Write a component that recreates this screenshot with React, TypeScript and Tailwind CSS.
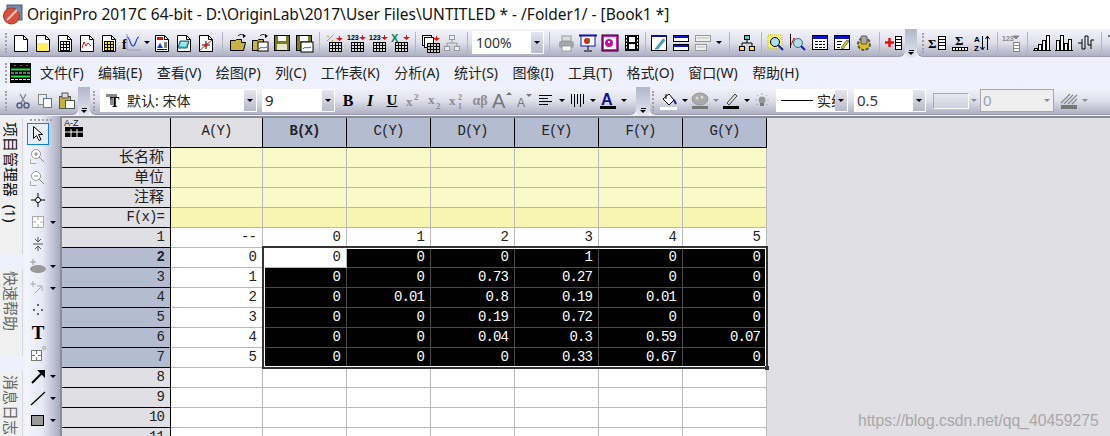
import type { ReactNode } from "react";

const mono = "font-['Liberation_Mono','Noto_Sans_CJK_SC',monospace]";
const cjk = "font-['Noto_Sans','Noto_Sans_CJK_SC',sans-serif]";

const S = ({ children, w = 20, h = 20 }: { children?: ReactNode; w?: number; h?: number }) => (
  <svg width={w} height={h} viewBox={`0 0 ${w} ${h}`} className="shrink-0">
    {children}
  </svg>
);

// small table drawn with lines
const Tbl = ({ x, y, c, r, cw = 4, ch = 3, fill = "#fff", line = "#000" }: { x: number; y: number; c: number; r: number; cw?: number; ch?: number; fill?: string; line?: string }) => {
  const w = c * cw;
  const h = r * ch;
  return (
    <g>
      <rect x={x + 0.5} y={y + 0.5} width={w} height={h} fill={fill} stroke={line} />
      {Array.from({ length: c - 1 }).map((_, i) => (
        <path key={i} d={`M${x + 0.5 + (i + 1) * cw} ${y}v${h}`} stroke={line} />
      ))}
      {Array.from({ length: r - 1 }).map((_, i) => (
        <path key={i} d={`M${x} ${y + 0.5 + (i + 1) * ch}h${w}`} stroke={line} />
      ))}
    </g>
  );
};

const Doc = ({ children }: { children?: ReactNode }) => (
  <S>
    <path d="M3.500 2.500h9l4 4v12h-13z" fill="#fff" stroke="#000" />
    <path d="M12.500 2.500v4h4" fill="none" stroke="#000" />
    {children}
  </S>
);

const Folder = ({ children }: { children?: ReactNode }) => (
  <S>
    <path d="M2.500 7.500h5l1-1h5v3h4l-2 8h-13z" fill="#c9b24a" stroke="#000" />
    <path d="M10 3c2-2 4-2 6 0" fill="none" stroke="#000" />
    <path d="M15 1l3 2-3 2z" fill="#000" />
    {children}
  </S>
);

const Floppy = ({ children }: { children?: ReactNode }) => (
  <S>
    <rect x="2.500" y="2.500" width="15" height="15" fill="#7b7b1a" stroke="#000" />
    <rect x="6" y="3" width="8" height="5" fill="#fff" />
    {children}
  </S>
);

const DownRed = ({ x, y }: { x: number; y: number }) => (
  <path d={`M${x} ${y}h3v-2h1v2h3l-3.500 3z`} fill="#e01010" />
);

const Bars = ({ v }: { v: number[] }) => (
  <S>
    <path d="M1 17.500h18" stroke="#000" />
    {v.map((h, i) => (
      <rect key={i} x={2.5 + i * 4} y={17.5 - h} width="3" height={h} fill="#fff" stroke="#000" />
    ))}
  </S>
);

const Arrow = () => (
  <span className="w-[9px] shrink-0 flex justify-center">
    <span className="w-0 h-0 border-l-[3px] border-r-[3px] border-t-[3px] border-l-transparent border-r-transparent border-t-black" />
  </span>
);

const GArrow = () => (
  <span className="w-[9px] shrink-0 flex justify-center">
    <span className="w-0 h-0 border-l-[3px] border-r-[3px] border-t-[3px] border-l-transparent border-r-transparent border-t-[#8c8c96]" />
  </span>
);

const B = ({ children }: { children?: ReactNode }) => (
  <div className="w-[22px] h-[22px] shrink-0 flex items-center justify-center">{children}</div>
);

const Sep = ({ className }: { className: string }) => (
  <div className={`${className} h-[22px] shrink-0 flex justify-center`}>
    <div className="w-px h-full bg-[#b4b5c4]" />
  </div>
);

const Grip = () => <div className="w-[2px] h-[20px] shrink-0 border-l-2 border-dotted border-[#a0a1ad]" />;

const Handle = ({ className }: { className: string }) => (
  <div className={`${className} h-[29px] shrink-0 self-start rounded-b-md bg-linear-to-b from-[#b4b7c8] to-[#e4e6f2] flex flex-col items-center justify-end pb-[3px]`}>
    <div className="w-[5px] h-px bg-black mb-px" />
    <div className="w-0 h-0 border-l-[3px] border-r-[3px] border-t-[3px] border-l-transparent border-r-transparent border-t-black" />
  </div>
);

const Band = ({ className, children }: { className: string; children: ReactNode }) => (
  <div className={`${className} h-[28px] flex items-center bg-linear-to-b from-[#f3f4fb] via-[#dfe0ea] to-[#aeb0c2] border-b border-[#9a9bb0]`}>
    {children}
  </div>
);

const Combo = ({ className, children, gray }: { className: string; children: ReactNode; gray?: boolean }) => (
  <div className={`${className} h-[23px] shrink-0 flex items-center overflow-hidden border ${gray ? "bg-[#efefef] border-[#a8a8a8]" : "bg-white border-white"}`}>
    <div className={`flex-1 min-w-0 overflow-hidden flex items-center ${cjk} text-[15px] ${gray ? "text-[#9aa0b0]" : "text-[#222]"}`}>{children}</div>
    {gray ? (
      <div className="w-[12px] flex justify-center"><GArrow /></div>
    ) : (
      <div className="w-[12px] h-full shrink-0 bg-linear-to-b from-[#e4e5ee] to-[#b8bacb] flex items-center justify-center"><Arrow /></div>
    )}
  </div>
);

const Txt = ({ x, y, s, t, f = "#000", w, fam = "Liberation Serif" }: { x: number; y: number; s: number; t: string; f?: string; w?: number; fam?: string }) => (
  <text x={x} y={y} fontSize={s} fill={f} fontWeight={w} fontFamily={fam}>{t}</text>
);

function TopBar() {
  return (
    <div className="h-[29px] flex">
      <Band className="w-[905px] rounded-br-md">
        <div className="ml-[5px] mr-[3px]"><Grip /></div>
        <B><Doc /></B>
        <B><Doc><rect x="4" y="10" width="12" height="8" fill="#ffef60" /></Doc></B>
        <B><Doc><Tbl x={5} y={8} c={3} r={3} cw={3} ch={3} /></Doc></B>
        <B><Doc><path d="M5 15l2-6 2 4 2-3 3 3" fill="none" stroke="#e01010" /></Doc></B>
        <B><Doc><Tbl x={5} y={8} c={3} r={3} cw={3} ch={3} fill="#ffe800" /></Doc></B>
        <B>
          <S>
            <Txt x={1} y={16} s={14} w={700} t="f" />
            <path d="M6 4c3 0 3 9 6 9s3-9 6-9" fill="none" stroke="#2040e0" strokeWidth="1.2" />
            <path d="M6 1v16h14" fill="none" stroke="#9a9ab0" />
          </S>
        </B>
        <Arrow />
        <B>
          <Doc>
            <rect x="5" y="4" width="6" height="3" fill="#e01010" />
            <path d="M5 15l3-5 3 5z" fill="#2040e0" />
            <path d="M12 10h3M12 12h3M12 14h3M5 16.500h10" stroke="#000" />
          </Doc>
        </B>
        <B><Doc><path d="M4 15l2-7h9l-2 7z" fill="#50c8d0" stroke="#206070" /><path d="M7 10h6M6 12h6" stroke="#fff" /></Doc></B>
        <B><Doc><path d="M4 17L16 7" stroke="#e01010" /><path d="M10 8v8M6 12h8" stroke="#000" /><circle cx="10" cy="12" r="1.500" fill="#e01010" /></Doc></B>
        <Sep className="w-[10px]" />
        <B><Folder /></B>
        <B><Folder><rect x="8" y="9" width="10" height="9" fill="#fff" stroke="#000" /><path d="M9 16c2-3 4 0 8-2" fill="none" stroke="#2040e0" /></Folder></B>
        <B><Floppy><rect x="5" y="11" width="10" height="6" fill="#e6e6d0" /></Floppy></B>
        <B><Floppy><rect x="7" y="9" width="12" height="10" fill="#fff" stroke="#000" /><path d="M9 16c2-3 4 0 8-2" fill="none" stroke="#2040e0" /></Floppy></B>
        <Sep className="w-[8px]" />
        <B><S><path d="M3 8l6-6M3 3l2 1M8 7l1 2" stroke="#d0a000" /><Tbl x={5} y={9} c={4} r={3} cw={3} ch={3} fill="#ddd" /><DownRed x={12} y={5} /></S></B>
        <B><S><Txt x={1} y={7} s={7} w={700} t="123" fam="Liberation Sans" /><Tbl x={5} y={9} c={4} r={3} cw={3} ch={3} fill="#ddd" /><DownRed x={13} y={4} /></S></B>
        <B><S><Txt x={1} y={7} s={7} w={700} t="123" fam="Liberation Sans" /><Tbl x={5} y={9} c={4} r={3} cw={3} ch={3} fill="#ddd" /><DownRed x={13} y={4} /></S></B>
        <B><S><Txt x={1} y={9} s={11} w={700} f="#108060" t="X" fam="Liberation Sans" /><Tbl x={5} y={9} c={4} r={3} cw={3} ch={3} fill="#ddd" /><DownRed x={13} y={4} /></S></B>
        <Sep className="w-[8px]" />
        <B><S><rect x="2.500" y="2.500" width="9" height="10" fill="#fff" stroke="#000" /><rect x="4.500" y="4.500" width="9" height="10" fill="#fff" stroke="#000" /><Tbl x={7} y={10} c={4} r={3} cw={3} ch={3} fill="#ccc" /><DownRed x={13} y={5} /></S></B>
        <B><S><path d="M10 6v4M5 14v-4h10v4" fill="none" stroke="#999" /><rect x="7.500" y="2.500" width="5" height="4" fill="#eee" stroke="#999" /><rect x="2.500" y="13.500" width="5" height="4" fill="#eee" stroke="#999" /><rect x="12.500" y="13.500" width="5" height="4" fill="#eee" stroke="#999" /></S></B>
        <Sep className="w-[9px]" />
        <Combo className="w-[72px]"><span className="pl-[3px] text-[#333] text-[14px]">100%</span></Combo>
        <Sep className="w-[11px]" />
        <B><S><rect x="3" y="8" width="15" height="7" rx="2" fill="#a5a5ad" /><rect x="6" y="3" width="9" height="5" fill="#ddd" stroke="#999" /><rect x="6" y="13" width="9" height="5" fill="#fff" stroke="#999" /></S></B>
        <B><S><path d="M1 2.500h18" stroke="#1010c0" strokeWidth="2" /><rect x="3" y="3" width="14" height="10" fill="#fff" stroke="#1010c0" /><circle cx="9" cy="8" r="3" fill="#e02020" /><path d="M9 8l3-3v3z" fill="#20a020" /><path d="M10 13v4M6 18h8" stroke="#000" /></S></B>
        <B><S><rect x="2" y="2" width="16" height="16" fill="#f010d0" stroke="#000" /><rect x="4" y="4" width="12" height="12" fill="#fff" /><circle cx="9" cy="10" r="4" fill="#c010a0" /><rect x="8" y="8" width="2" height="2" fill="#fff" /></S></B>
        <B><S><rect x="3" y="2" width="14" height="16" fill="#000" /><rect x="7" y="4" width="6" height="5" fill="#fff" /><rect x="7" y="11" width="6" height="5" fill="#fff" /><path d="M4.500 3v14M15.500 3v14" stroke="#fff" strokeDasharray="2 1.500" /></S></B>
        <Sep className="w-[5px]" />
        <B><S><rect x="2.500" y="3.500" width="15" height="14" fill="#fff" stroke="#000" /><path d="M2 3h16" stroke="#1010a0" strokeWidth="2" /><path d="M6 16l8-10 2 1-7 9z" fill="#30b0c0" stroke="#206070" strokeWidth=".5" /></S></B>
        <B><S><rect x="2.500" y="2.500" width="15" height="6" fill="#fff" stroke="#000" /><rect x="2.500" y="11.500" width="15" height="6" fill="#fff" stroke="#000" /><rect x="3" y="3" width="14" height="2" fill="#1010d0" /><rect x="3" y="12" width="14" height="2" fill="#1010d0" /></S></B>
        <B><S><rect x="2.500" y="2.500" width="15" height="6" fill="#eee" stroke="#999" /><rect x="2.500" y="11.500" width="11" height="6" fill="#eee" stroke="#999" /><path d="M4 5h12M4 14h8" stroke="#bbb" /></S></B>
        <Arrow />
        <Sep className="w-[13px]" />
        <B><S><path d="M10 6v4M5 14v-4h10v4" fill="none" stroke="#000" /><rect x="7.500" y="2.500" width="5" height="4" fill="#40d0d0" stroke="#000" /><rect x="2.500" y="13.500" width="5" height="4" fill="#ffe040" stroke="#000" /><rect x="12.500" y="13.500" width="5" height="4" fill="#ffe040" stroke="#000" /></S></B>
        <Sep className="w-[7px]" />
        <B><S><rect x="2" y="2" width="14" height="13" fill="#fff080" stroke="#c0c000" strokeDasharray="1 1" /><circle cx="9" cy="9" r="4.500" fill="#a8e0f0" stroke="#000" /><path d="M12 12l5 5" stroke="#1020a0" strokeWidth="2" /></S></B>
        <B><S><path d="M2.500 1v14" stroke="#000" /><path d="M3 12l3-7 3 4" fill="none" stroke="#e01010" /><circle cx="10" cy="10" r="4.500" fill="#b0e0e0" stroke="#4060a0" /><path d="M13 13l4 4" stroke="#1020a0" strokeWidth="2" /></S></B>
        <B><S><rect x="2.500" y="2.500" width="15" height="14" fill="#fff" stroke="#000" /><rect x="3" y="3" width="14" height="3" fill="#1010c0" /><path d="M5 8.500h10M5 11.500h10M5 14.500h10" stroke="#000" strokeDasharray="3 1" /></S></B>
        <B><S><rect x="2.500" y="2.500" width="15" height="14" fill="#fff" stroke="#000" /><rect x="3" y="3" width="14" height="3" fill="#1010c0" /><path d="M5 8.500h5M5 11.500h4M5 14.500h3" stroke="#000" /><path d="M9 15l6-8 2 1-6 8z" fill="#e0d020" stroke="#000" strokeWidth=".5" /></S></B>
        <B><S><circle cx="10" cy="11" r="6" fill="#d8c020" stroke="#555" strokeDasharray="3 1.500" strokeWidth="2" /><rect x="7" y="3" width="6" height="8" rx="1" fill="#aaa" stroke="#555" /></S></B>
        <Sep className="w-[8px]" />
        <B><S><path d="M1 9.500h9M5.500 5v9" stroke="#e01010" strokeWidth="2.500" /><rect x="11.500" y="3.500" width="6" height="13" fill="#fff" stroke="#000" /><path d="M12 6.500h5M12 9.500h5M12 12.500h5" stroke="#000" /></S></B>
      </Band>
      <Handle className="w-[12px]" />
      <Band className="flex-1 rounded-bl-md overflow-hidden">
        <div className="ml-[5px] mr-[3px]"><Grip /></div>
        <B><S><Txt x={0} y={15} s={13} w={700} t="Σ" /><rect x="10.500" y="3.500" width="7" height="13" fill="#fff" stroke="#000" /><path d="M11 6.500h6M11 9.500h6M11 12.500h6" stroke="#000" /></S></B>
        <B><S><Txt x={5} y={12} s={13} w={700} t="Σ" /><Tbl x={2} y={14} c={5} r={1} cw={3} ch={3} fill="#fff" /></S></B>
        <B><S><Txt x={2} y={9} s={8} w={700} t="A" fam="Liberation Sans" /><Txt x={2} y={18} s={8} w={700} t="Z" fam="Liberation Sans" /><path d="M10.500 3v14M15.500 3v14M8.500 14l2 3 2-3M13.500 6l2-3 2 3" fill="none" stroke="#000" /></S></B>
        <Sep className="w-[8px]" />
        <B><S><Txt x={0} y={8} s={7} w={700} t="123" f="#888" fam="Liberation Sans" /><rect x="11.500" y="9.500" width="6" height="9" fill="#fff" stroke="#888" /><path d="M12 12.500h5M12 15.500h5M11 3h6l-3 3z" stroke="#888" fill="#888" /></S></B>
        <Sep className="w-[8px]" />
        <B><Bars v={[2, 6, 10, 15]} /></B>
        <B><Bars v={[10, 15, 7, 11]} /></B>
        <B><S><path d="M2 10h4v6h3v-13h3v9h3v-5h3" fill="none" stroke="#000" /><path d="M6 10v-4M15 12v4" stroke="#000" /></S></B>
        <Sep className="w-[9px]" />
        <B><S><path d="M1 3h20M8 3v14" stroke="#000" /></S></B>
      </Band>
    </div>
  );
}

const menus = ["文件(F)", "编辑(E)", "查看(V)", "绘图(P)", "列(C)", "工作表(K)", "分析(A)", "统计(S)", "图像(I)", "工具(T)", "格式(O)", "窗口(W)", "帮助(H)"];

function MenuBar() {
  return (
    <div className="h-[29px] bg-[#eef0fb] flex items-center">
      <div className="ml-[5px] mr-[3px]"><Grip /></div>
      <svg width="21" height="20" viewBox="0 0 21 20" className="shrink-0">
        <rect width="21" height="20" fill="#000" />
        <path d="M4 2.500h2M10 2.500h2M16 2.500h2" stroke="#f02020" />
        <path d="M1 6.500h19M1 13.500h19" stroke="#20e040" strokeWidth="2" />
        <path d="M1 10h19M1 16.500h19" stroke="#d0ffd0" strokeDasharray="3 1" />
      </svg>
      <div className={`ml-[9px] flex gap-[14.4px] ${cjk} text-[14px] text-[#222] whitespace-nowrap`}>
        {menus.map((m) => (
          <span key={m}>{m}</span>
        ))}
      </div>
    </div>
  );
}

function FormatBar() {
  return (
    <div className="h-[29px] flex">
      <Band className="w-[78px] rounded-br-md">
        <div className="ml-[5px] mr-[5px]"><Grip /></div>
        <B><S><path d="M7 3l5 9M13 3l-5 9" stroke="#8a8a96" strokeWidth="1.500" /><circle cx="6.500" cy="14.500" r="2.500" fill="none" stroke="#50608a" strokeWidth="1.500" /><circle cx="13.500" cy="14.500" r="2.500" fill="none" stroke="#50608a" strokeWidth="1.500" /></S></B>
        <B><S><rect x="3.500" y="3.500" width="8" height="10" fill="#eee" stroke="#888" /><rect x="8.500" y="7.500" width="8" height="9" fill="#fff" stroke="#5a7a9a" /></S></B>
        <B><S><rect x="2.500" y="5.500" width="11" height="12" fill="#c8b040" stroke="#555" /><rect x="5" y="2" width="6" height="5" fill="#ddd" stroke="#555" /><rect x="8.500" y="9.500" width="9" height="8" fill="#fff" stroke="#555" /></S></B>
      </Band>
      <Handle className="w-[12px]" />
      <Band className="w-[546px] rounded-br-md rounded-bl-md">
        <div className="ml-[3px] mr-[5px]"><Grip /></div>
        <Combo className="w-[157px]">
          <span className="w-[26px] flex justify-center shrink-0">
            <S w={18} h={18}>
              <rect x="1" y="2" width="11" height="3" fill="#888" />
              <rect x="5" y="2" width="3" height="11" fill="#888" />
              <Txt x={5} y={15} s={14} w={700} t="T" />
            </S>
          </span>
          <span className="text-[14px] whitespace-nowrap">默认: 宋体</span>
        </Combo>
        <div className="w-[5px] shrink-0" />
        <Combo className="w-[73px]"><span className="pl-[2px]">9</span></Combo>
        <div className="w-[2px] shrink-0" />
        <B><span className="font-['Liberation_Serif'] font-bold text-[16px]">B</span></B>
        <B><span className="font-['Liberation_Serif'] font-bold italic text-[16px]">I</span></B>
        <B><span className="font-['Liberation_Serif'] font-bold underline text-[15px]">U</span></B>
        <B><S><Txt x={2} y={15} s={13} w={700} f="#8c8c98" t="x" /><Txt x={10} y={9} s={9} w={700} f="#8c8c98" t="2" /></S></B>
        <B><S><Txt x={2} y={13} s={13} w={700} f="#8c8c98" t="x" /><Txt x={10} y={18} s={9} w={700} f="#8c8c98" t="2" /></S></B>
        <B><S><Txt x={1} y={14} s={13} w={700} f="#8c8c98" t="x" /><Txt x={10} y={9} s={8} w={700} f="#8c8c98" t="2" /><Txt x={10} y={18} s={8} w={700} f="#8c8c98" t="1" /></S></B>
        <B><span className="font-['Liberation_Serif'] font-bold text-[14px] text-[#8c8c98]">αβ</span></B>
        <B><S><Txt x={0} y={17} s={20} f="#777" t="A" fam="Liberation Sans" /><path d="M14 4h6l-3-3z" fill="#777" /></S></B>
        <B><S><Txt x={3} y={16} s={12} f="#777" t="A" fam="Liberation Sans" /><path d="M12 3h6l-3 3z" fill="#777" /></S></B>
        <B><S><path d="M3 4.500h13M3 7.500h9M3 10.500h13M3 13.500h9" stroke="#000" /></S></B>
        <Arrow />
        <B><S><path d="M4.500 3v10M7.500 3v13M10.500 3v10M13.500 3v13M16.500 3v10" stroke="#000" /></S></B>
        <Arrow />
        <B><S><Txt x={3} y={14} s={16} w={700} f="#101090" t="A" fam="Liberation Sans" /><rect x="2" y="15" width="16" height="3" fill="#000" /></S></B>
        <Arrow />
      </Band>
      <Handle className="w-[14px]" />
      <Band className="flex-1 rounded-bl-md overflow-hidden">
        <div className="ml-[2px] mr-[4px]"><Grip /></div>
        <B><S><path d="M4 8l6-5 5 6-5 5z" fill="#fff" stroke="#000" /><path d="M7 3v5" stroke="#000" /><path d="M15 9l2 4" stroke="#1020a0" strokeWidth="2" /><rect x="1" y="16" width="17" height="3" fill="#fff" /></S></B>
        <Arrow />
        <B><S><ellipse cx="10" cy="8" rx="8" ry="6" fill="#aaa" stroke="#999" /><circle cx="7" cy="7" r="1.500" fill="#ddd" /><circle cx="12" cy="6" r="1.500" fill="#ddd" /><rect x="2" y="15" width="16" height="3" fill="#777" /></S></B>
        <GArrow />
        <B><S><path d="M6 12l8-9 2 2-8 9z" fill="#ddd" stroke="#444" /><rect x="2" y="15" width="16" height="3" fill="#000" /></S></B>
        <Arrow />
        <B><S><circle cx="10" cy="9" r="3.500" fill="#999" /><rect x="8" y="12" width="4" height="3" fill="#777" /><path d="M10 2v2M3 9h2M15 9h2M5 4l1 1M15 4l-1 1M4 14l2-1M16 14l-2-1" stroke="#aaa" /></S></B>
        <Combo className="w-[72px] ml-[3px]">
          <span className="w-[32px] h-px bg-black ml-[4px] mr-[4px] shrink-0" />
          <span className="text-[14px] whitespace-nowrap">实线</span>
        </Combo>
        <div className="w-[6px] shrink-0" />
        <Combo className="w-[72px]"><span className="pl-[2px] text-[#334]">0.5</span></Combo>
        <div className="w-[7px] shrink-0" />
        <div className="w-[36px] h-[16px] shrink-0 border border-white border-t-[#aaa] border-l-[#aaa] bg-linear-to-b from-[#e8e9f0] to-[#ccd0dc]" />
        <GArrow />
        <div className="w-[2px] shrink-0" />
        <Combo gray className="w-[74px]"><span className="pl-[2px]">0</span></Combo>
        <div className="w-[4px] shrink-0" />
        <B><S><path d="M2 12l9-9M5 13l9-9M9 13l9-9M13 13l5-5" stroke="#888" strokeWidth="1.200" /><rect x="2" y="14" width="16" height="4" fill="#777" /></S></B>
        <GArrow />
      </Band>
    </div>
  );
}

const Tab = ({ className, text, muted }: { className: string; text: string; muted?: boolean }) => (
  <div className={`${className} w-[23px] shrink-0 bg-[#f0f0f0] border-r border-[#d8d8e0] flex justify-start items-center ${cjk} text-[15px] leading-[22px] ${muted ? "text-[#666]" : "text-[#111]"} [writing-mode:vertical-rl] [text-orientation:sideways] whitespace-pre overflow-hidden`}>
    {text}
  </div>
);

const Side = ({ children, arrow, on }: { children?: ReactNode; arrow?: boolean; on?: boolean }) => (
  <div className="h-[22px] flex items-center">
    <div className={`w-[22px] h-[22px] shrink-0 flex items-center justify-center ${on ? "border border-[#1080e0] bg-[#e8eef8]" : ""}`}>{children}</div>
    {arrow && <div className="-ml-[1px]"><Arrow /></div>}
  </div>
);

function SideTools() {
  return (
    <div className="w-[35px] shrink-0 bg-linear-to-r from-[#f4f5fc] via-[#e8e9f4] to-[#a8abc0] pl-[2px]">
      <div className="h-[7px] flex items-center pl-[3px]">
        <div className="w-[22px] border-t-2 border-dotted border-[#a0a1ad]" />
      </div>
      <Side on><S><path d="M5.500 2.500v12l3-3 2.500 5 2-1-2.500-5h4z" fill="#fff" stroke="#000" /></S></Side>
      <Side><S><circle cx="8" cy="8" r="4.500" fill="#fff" stroke="#999" /><path d="M6 8h4M8 6v4M11 11l5 5" stroke="#888" /><path d="M2.500 13v4.500h6" fill="none" stroke="#aaa" /></S></Side>
      <Side><S><circle cx="8" cy="8" r="4.500" fill="#fff" stroke="#999" /><path d="M6 8h4M11 11l5 5" stroke="#888" /><path d="M2.500 13v4.500h6" fill="none" stroke="#aaa" /></S></Side>
      <Side><S><path d="M10 3v14M3 10h14" stroke="#000" /><circle cx="10" cy="10" r="2.500" fill="#fff" stroke="#000" /></S></Side>
      <Side arrow><S><rect x="4.500" y="4.500" width="11" height="11" fill="#fff" stroke="#aaa" /><path d="M10 4v4M10 12v4M4 10h4M12 10h4" stroke="#aaa" /></S></Side>
      <Side><S><path d="M10 3v5M7 5l3 3 3-3M10 17v-5M7 15l3-3 3 3M5 10h10" fill="none" stroke="#555" /></S></Side>
      <Side arrow><S><ellipse cx="10" cy="13" rx="8" ry="4" fill="#999" /><path d="M5 3v6M2 6h6" stroke="#999" /></S></Side>
      <Side arrow><S><path d="M5 3v6M2 6h6" stroke="#aaa" /><path d="M7 15l7-7M9 8h5v5" fill="none" stroke="#aaa" /></S></Side>
      <Side><S><rect x="9" y="4" width="2" height="2" fill="#666" /><rect x="5" y="9" width="2" height="2" fill="#666" /><rect x="13" y="9" width="2" height="2" fill="#666" /><rect x="9" y="13" width="2" height="2" fill="#666" /></S></Side>
      <Side><span className="font-['Liberation_Serif'] font-bold text-[19px] leading-none text-black">T</span></Side>
      <Side><S><rect x="3.500" y="6.500" width="10" height="10" fill="#fff" stroke="#777" /><path d="M8.500 6v4M8.500 13v4M3 11.500h4M10 11.500h4" stroke="#777" /><circle cx="16" cy="4" r="1.500" fill="none" stroke="#aaa" /></S></Side>
      <Side arrow><S><path d="M4 17L15 6" stroke="#000" strokeWidth="2" /><path d="M9 4h8v8z" fill="#000" /></S></Side>
      <Side arrow><S><path d="M3 17L17 4" stroke="#000" strokeWidth="1.300" /></S></Side>
      <Side arrow><S><rect x="3.500" y="5.500" width="12" height="10" fill="#999" stroke="#000" /></S></Side>
    </div>
  );
}

const columns = [
  { name: "A(Y)" },
  { name: "B(X)", bold: true, sel: true },
  { name: "C(Y)", sel: true },
  { name: "D(Y)", sel: true },
  { name: "E(Y)", sel: true },
  { name: "F(Y)", sel: true },
  { name: "G(Y)", sel: true },
];

const meta = ["长名称", "单位", "注释", "F(x)="];

const rows = [
  ["0", "0", "0", "0", "1", "0", "0"],
  ["1", "0", "0", "0.73", "0.27", "0", "0"],
  ["2", "0", "0.01", "0.8", "0.19", "0.01", "0"],
  ["3", "0", "0", "0.19", "0.72", "0", "0"],
  ["4", "0", "0", "0.04", "0.3", "0.59", "0.07"],
  ["5", "0", "0", "0", "0.33", "0.67", "0"],
];

const hd = "h-[20px] border-r border-b border-black flex items-center justify-end pr-[6px] pb-[2px] leading-none";
const cell = "h-[20px] border-r border-b flex items-center justify-end pr-[6px] pb-[2px] leading-none";

function Sheet() {
  return (
    <div className="relative w-[706px] shrink-0">
      <div className={`grid grid-cols-[109px_92px_repeat(6,84px)] ${mono} text-[14px] tracking-[-0.9px] text-[#222]`}>
        <div className="h-[30px] bg-[#e0dfe3] border-r border-b border-black relative">
          <span className="absolute left-[2px] top-0 font-['Liberation_Sans'] text-[9px] tracking-normal leading-[10px]">A-Z</span>
          <div className="absolute left-[3px] top-[9px]"><svg width="18" height="10" viewBox="0 0 18 10"><rect width="18" height="10" fill="#000" /><path d="M0 5h18M6 2v8M12 2v8" stroke="#fff" /></svg></div>
        </div>
        {columns.map((c) => (
          <div key={c.name} className={`h-[30px] border-r border-b border-black flex items-center justify-center pb-[2px] ${c.sel ? "bg-[#b4bcd2]" : "bg-[#e0dfe3]"} ${c.bold ? "font-bold" : ""}`}>
            {c.name}
          </div>
        ))}
        {meta.map((m, i) => (
          <div key={m} className="contents">
            <div className={`${hd} bg-[#e0dfe3] ${i === 3 ? "" : `${cjk} text-[15px] tracking-normal`}`}>{m}</div>
            {columns.map((c) => (
              <div key={c.name} className={`h-[20px] border-r border-b border-[#b8b8b8] ${i === 3 ? "bg-[#f7f6b0]" : "bg-[#faf9c8]"}`} />
            ))}
          </div>
        ))}
        <div className={`${hd} bg-[#e0dfe3]`}>1</div>
        {["--", "0", "1", "2", "3", "4", "5"].map((v, i) => (
          <div key={i} className={`${cell} border-[#b8b8b8] bg-white`}>{v}</div>
        ))}
        {rows.map((r, y) => (
          <div key={y} className="contents">
            <div className={`${hd} bg-[#b4bcd2] ${y === 0 ? "font-bold" : ""}`}>{y + 2}</div>
            {r.map((v, x) => {
              if (x === 0 || (x === 1 && y === 0)) return <div key={x} className={`${cell} border-[#b8b8b8] bg-white`}>{v}</div>;
              return <div key={x} className={`${cell} bg-black text-white border-[#4a4a4a]`}>{v}</div>;
            })}
          </div>
        ))}
        {[8, 9, 10, 11].map((n) => (
          <div key={n} className="contents">
            <div className={`${hd} bg-[#e0dfe3]`}>{n}</div>
            {columns.map((c) => (
              <div key={c.name} className={`${cell} border-[#b8b8b8] bg-white`} />
            ))}
          </div>
        ))}
      </div>
      {/* selection frame */}
      <div className="absolute left-[200px] top-[128px] w-[506px] h-[123px] border-2 border-[#333] pointer-events-none">
        <div className="w-full h-full border border-white" />
        <div className="absolute -right-[3px] -bottom-[3px] w-[4px] h-[4px] bg-[#333]" />
      </div>
    </div>
  );
}

export default function App() {
  return (
    <div className="w-[1110px] h-[436px] overflow-hidden bg-[#eef0fb] flex flex-col">
      <div className="h-[29px] bg-white flex items-center shrink-0">
        <div className="ml-[2px] w-[22px] h-[22px] relative shrink-0">
          <svg width="22" height="22" viewBox="0 0 22 22">
            <rect x="5" y="1" width="15" height="15" fill="#7a8aa8" stroke="#4a5a80" />
            <circle cx="9.500" cy="12" r="8" fill="#d85040" stroke="#a03828" />
            <path d="M5 16L15 6" stroke="#f0d0c8" strokeWidth="2" />
          </svg>
        </div>
        <span className="ml-[3px] font-['Noto_Sans',sans-serif] text-[15.5px] text-[#111] whitespace-nowrap">OriginPro 2017C 64-bit - D:\OriginLab\2017\User Files\UNTITLED * - /Folder1/ - [Book1 *]</span>
      </div>
      <TopBar />
      <MenuBar />
      <FormatBar />
      <div className="flex flex-1 min-h-0 overflow-hidden">
        <div className="w-[25px] shrink-0 flex flex-col pt-[2px]">
          <Tab className="h-[136px] pt-[4px]" text="项目管理器  (1)" />
          <div className="h-[15px] shrink-0" />
          <Tab className="h-[87px] pt-[2px]" text="快速帮助" muted />
          <div className="h-[15px] shrink-0" />
          <Tab className="h-[66px] pt-[4px]" text="消息日志" muted />
        </div>
        <SideTools />
        <div className="flex-1 min-w-0 flex flex-col border-l-2 border-[#8c8c94]">
          <div className="h-[2px] bg-[#8c8c94] shrink-0" />
          <div className="flex flex-1 min-h-0 bg-[#e0dfe3] relative">
            <Sheet />
            <span className="absolute left-[796px] top-[291px] font-['Liberation_Sans',sans-serif] text-[15.7px] text-[#a8a8a8] whitespace-nowrap">https://blog.csdn.net/qq_40459275</span>
          </div>
        </div>
      </div>
    </div>
  );
}
